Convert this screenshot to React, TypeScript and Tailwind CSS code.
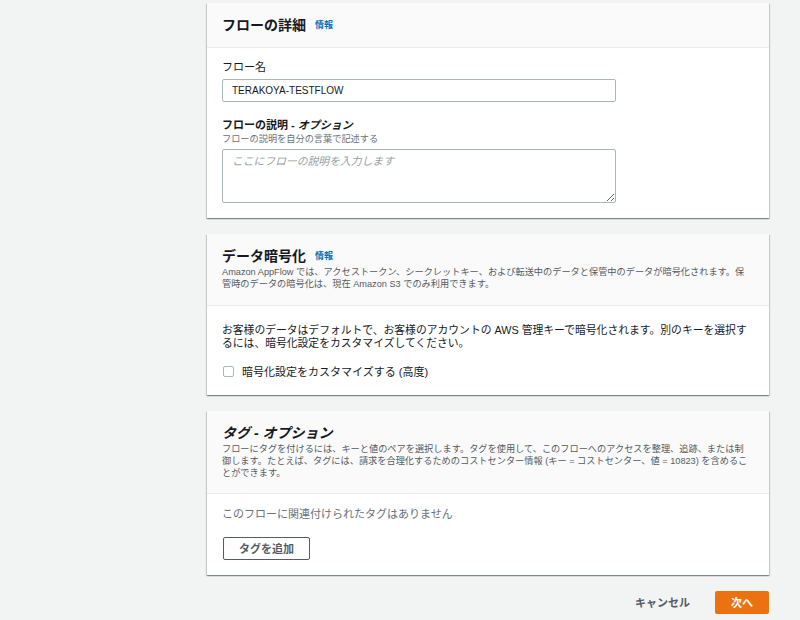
const cardShadow =
  'bg-white shadow-[0_1px_1px_0_rgba(0,28,36,0.3),1px_1px_1px_0_rgba(0,28,36,0.15),-1px_1px_1px_0_rgba(0,28,36,0.15)]';

const InfoLink = () => (
  <a className="ml-[9px] text-[9px] font-bold text-[#0073bb] leading-[19px] align-middle">情報</a>
);

export default function App() {
  return (
    <div className="min-h-[620px] bg-[#f2f3f3] pt-[3px] pl-[207px] font-['Liberation_Sans','Noto_Sans_CJK_JP',sans-serif] text-[#16191f]">
      <div className="flex w-[562px] flex-col gap-[16px]">
        {/* flow details */}
        <section className={cardShadow}>
          <div className="border-b border-[#eaeded] bg-[#fafafa] pl-[15px] pr-[19px] pt-[13px] pb-[12px]">
            <h2 className="flex items-center text-[14px] font-bold leading-[19px]">
              フローの詳細
              <InfoLink />
            </h2>
          </div>
          <div className="pl-[15px] pr-[19px] pt-[12px] pb-[15px]">
            <label className="block text-[11px] leading-[14px]">フロー名</label>
            <input
              className="mt-[5px] block h-[23px] w-[394px] rounded-[2px] border border-[#aab7b8] bg-white pl-[9px] text-[10px] text-[#16191f] outline-none"
              defaultValue="TERAKOYA-TESTFLOW"
            />
            <label className="mt-[16px] block text-[11px] font-semibold leading-[14px]">
              フローの説明 - <i>オプション</i>
            </label>
            <p className="mt-px text-[9.2px] leading-[12px] text-[#687078]">フローの説明を自分の言葉で記述する</p>
            <textarea
              className="mt-[4px] block h-[54px] w-[394px] rounded-[2px] border border-[#aab7b8] bg-white px-[9px] py-[4px] text-[10.8px] leading-[14px] outline-none placeholder:italic placeholder:text-[#95a1a2]"
              placeholder="ここにフローの説明を入力します"
            />
          </div>
        </section>

        {/* encryption */}
        <section className={cardShadow}>
          <div className="border-b border-[#eaeded] bg-[#fafafa] pl-[15px] pr-[19px] pt-[13px] pb-[14px]">
            <h2 className="flex items-center text-[14px] font-bold leading-[19px]">
              データ暗号化
              <InfoLink />
            </h2>
            <p className="text-[9.2px] leading-[12.3px] text-[#545b64]">
              Amazon AppFlow では、アクセストークン、シークレットキー、および転送中のデータと保管中のデータが暗号化されます。保管時のデータの暗号化は、現在 Amazon S3 でのみ利用できます。
            </p>
          </div>
          <div className="pl-[15px] pr-[19px] pt-[18px] pb-[16px]">
            <p className="text-[10.8px] leading-[13.5px]">
              お客様のデータはデフォルトで、お客様のアカウントの AWS 管理キーで暗号化されます。別のキーを選択するには、暗号化設定をカスタマイズしてください。
            </p>
            <label className="mt-[14px] flex items-center gap-[8px] text-[11px] leading-[14px]">
              <span className="ml-px block h-[11px] w-[11px] rounded-[2px] border border-[#aab7b8] bg-white" />
              暗号化設定をカスタマイズする (高度)
            </label>
          </div>
        </section>

        {/* tags */}
        <section className={cardShadow}>
          <div className="border-b border-[#eaeded] bg-[#fafafa] pl-[15px] pr-[19px] pt-[13px] pb-[14px]">
            <h2 className="text-[14px] font-bold italic leading-[19px]">タグ - オプション</h2>
            <p className="text-[9.2px] leading-[12.3px] text-[#545b64]">
              フローにタグを付けるには、キーと値のペアを選択します。タグを使用して、このフローへのアクセスを整理、追跡、または制御します。たとえば、タグには、請求を合理化するためのコストセンター情報 (キー = コストセンター、値 = 10823) を含めることができます。
            </p>
          </div>
          <div className="pl-[15px] pr-[19px] pt-[13px] pb-[15px]">
            <p className="text-[11px] leading-[14px] text-[#687078]">このフローに関連付けられたタグはありません</p>
            <button className="mt-[16px] ml-px h-[23px] w-[87px] rounded-[2px] border border-[#545b64] bg-white text-[11px] font-bold text-[#545b64]">
              タグを追加
            </button>
          </div>
        </section>

        <div className="flex items-center justify-end gap-[9px]">
          <button className="h-[23px] px-[16px] text-[11px] font-bold text-[#545b64]">キャンセル</button>
          <button className="h-[23px] w-[54px] rounded-[2px] bg-[#ec7211] text-[11px] font-bold text-white">次へ</button>
        </div>
      </div>
    </div>
  );
}
